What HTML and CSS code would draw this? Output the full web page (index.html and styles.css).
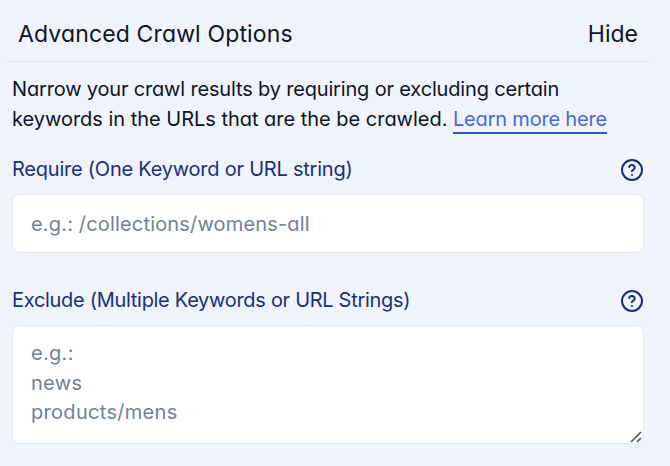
FILE: index.html
```html
<!DOCTYPE html>
<html lang="en">
<head>
    <meta charset="UTF-8">
    <meta name="viewport" content="width=device-width, initial-scale=1.0">
    <title>Advanced Crawl Options</title>
    <link rel="stylesheet" href="styles.css">
</head>
<body>
    <div class="panel">
        <div class="panel-header">
            <span class="panel-title">Advanced Crawl Options</span>
            <span class="panel-toggle">Hide</span>
        </div>
        <div class="panel-body">
            <p class="intro">
                <span class="intro-first">Narrow your crawl results by requiring or excluding certain</span><br>
                <span class="intro-second">keywords in the URLs that are the be crawled.</span>
                <a href="#" class="learn-more">Learn more here</a>
            </p>
            <div class="field">
                <div class="field-head">
                    <label class="label-require" for="require">Require (One Keyword or URL string)</label>
                    <svg class="help" viewBox="0 0 24 24">
                        <circle cx="12" cy="12" r="10"/>
                        <path d="M9.2 9a2.8 2.8 0 0 1 5.5.8c0 2-2.8 2-2.8 3.4"/>
                        <path d="M12 17h.01"/>
                    </svg>
                </div>
                <input class="control" id="require" type="text" placeholder="e.g.: /collections/womens-all">
            </div>
            <div class="field">
                <div class="field-head">
                    <label class="label-exclude" for="exclude">Exclude (Multiple Keywords or URL Strings)</label>
                    <svg class="help" viewBox="0 0 24 24">
                        <circle cx="12" cy="12" r="10"/>
                        <path d="M9.2 9a2.8 2.8 0 0 1 5.5.8c0 2-2.8 2-2.8 3.4"/>
                        <path d="M12 17h.01"/>
                    </svg>
                </div>
                <div class="area">
                    <textarea class="control" id="exclude" placeholder="e.g.:&#10;news&#10;products/mens"></textarea>
                    <svg class="grip" viewBox="0 0 12 12">
                        <path d="M1 11L11 1M7 11L11 7"/>
                    </svg>
                </div>
            </div>
        </div>
    </div>
</body>
</html>
```
FILE: styles.css
```css
* {
    box-sizing: border-box;
}
body {
    margin: 0;
    height: 466px;
    overflow: hidden;
    background-color: #f0f3fb;
    color: #0d1526;
    font-family: Inter, "Liberation Sans", sans-serif;
    font-feature-settings: "cv11";
    font-size: 20px;
    line-height: 30px;
}
.panel {
    width: 644px;
    margin-left: 6px;
}
.panel-header {
    display: flex;
    justify-content: space-between;
    align-items: center;
    height: 62px;
    padding: 7px 12px 0;
    border-bottom: 1px solid #dfe3ec;
    font-size: 23px;
}
.panel-title {
    letter-spacing: 0.14px;
}
.panel-body {
    padding: 13px 6px 0;
}
.intro {
    height: 60px;
    margin: 0;
    line-height: 29.5px;
    white-space: nowrap;
}
.intro-first {
    letter-spacing: -0.17px;
}
.intro-second {
    letter-spacing: -0.02px;
}
.learn-more {
    padding-bottom: 1px;
    border-bottom: 2px solid #2f5bc7;
    color: #466bd6;
    letter-spacing: -0.2px;
    text-decoration: none;
}
.field {
    margin-top: 19px;
}
.field + .field {
    margin-top: 32px;
}
.field-head {
    display: flex;
    justify-content: space-between;
    align-items: center;
    height: 30px;
    color: #1b3272;
}
.label-require {
    letter-spacing: -0.23px;
}
.label-exclude {
    letter-spacing: -0.3px;
}
.help {
    width: 24px;
    height: 24px;
    margin-top: 2px;
    fill: none;
    stroke: #18306f;
    stroke-width: 2;
    stroke-linecap: round;
    stroke-linejoin: round;
}
.control {
    display: block;
    width: 632px;
    height: 59px;
    margin-top: 10px;
    padding: 0 18px;
    border: 1px solid #e4e8f0;
    border-radius: 8px;
    background: #fff;
    font: inherit;
    font-feature-settings: "cv11";
    letter-spacing: 0.17px;
    outline: none;
}
.control::placeholder {
    color: #748096;
    opacity: 1;
}
textarea.control {
    height: 119px;
    padding-top: 13px;
    letter-spacing: 0.3px;
    line-height: 29.7px;
    resize: none;
    overflow: hidden;
}
.area {
    position: relative;
}
.grip {
    position: absolute;
    right: 2px;
    bottom: 1px;
    width: 12px;
    height: 12px;
    fill: none;
    stroke: #51555f;
    stroke-width: 1.7;
}
```
